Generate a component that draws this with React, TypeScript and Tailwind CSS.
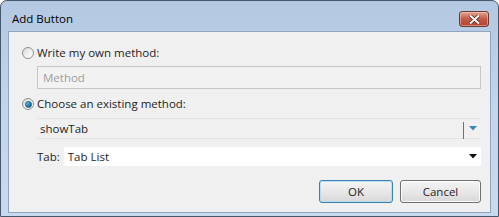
import React, { useState } from 'react';

const font = { fontFamily: '"Open Sans", "Noto Sans", sans-serif' };

const Radio: React.FC<{ checked: boolean }> = ({ checked }) => (
  <span className="relative w-[12px] h-[12px] rounded-full border border-[#8e8f8f] bg-gradient-to-br from-[#d5d5d5] via-[#f0f0f0] to-[#ffffff] flex items-center justify-center shrink-0">
    {checked && (
      <span className="w-[7px] h-[7px] rounded-full bg-gradient-to-br from-[#8fd6f0] via-[#2c8ec8] to-[#0f5a8a] border border-[#14507a]" />
    )}
  </span>
);

const Arrow: React.FC<{ color: string }> = ({ color }) => (
  <svg width="8" height="5" viewBox="0 0 8 5">
    <path d="M0 0 H8 L4 4.5 Z" fill={color} />
  </svg>
);

export default function App() {
  const [mode, setMode] = useState<'own' | 'existing'>('existing');

  return (
    <div style={font} className="w-[499px] h-[217px] text-[11.5px] text-[#1e1e1e] overflow-hidden">
      <div className="w-full h-full rounded-t-[7px] border border-[#47576b] bg-gradient-to-b from-[#b3c8e2] via-[#c3d5eb] to-[#c9daef] flex flex-col">
        {/* title bar */}
        <div className="h-[30px] flex items-start justify-between pl-[11px] pr-[9px]">
          <span className="mt-[10px] leading-[16px] text-[11.5px] text-black">Add Button</span>
          <button className="mt-[10px] w-[30px] h-[16px] rounded-[3px] border border-[#6a3a33] bg-gradient-to-b from-[#dfa594] via-[#c45a46] to-[#b4432e] flex items-center justify-center shadow-[inset_0_0_0_1px_rgba(255,220,210,0.45)]">
            <svg width="11" height="9" viewBox="0 0 11 9">
              <path d="M1 0.5 L5.5 4.5 L10 0.5 M1 8.5 L5.5 4.5 L10 8.5" stroke="#4a1f18" strokeWidth="3.2" fill="none" />
              <path d="M1 0.5 L5.5 4.5 L10 0.5 M1 8.5 L5.5 4.5 L10 8.5" stroke="#ffffff" strokeWidth="2" fill="none" />
            </svg>
          </button>
        </div>

        {/* client area */}
        <div className="mx-[7px] h-[182px] border border-[#8fa5c0] bg-[#f0f0f0] flex flex-col pt-[13px] pl-[13px] pr-[9px]">
          <label className="flex items-center gap-[3px] h-[16px]" onClick={() => setMode('own')}>
            <Radio checked={mode === 'own'} />
            <span>Write my own method:</span>
          </label>

          <div className="ml-[15px] mt-[5px] h-[23px] border border-[#c6c6c6] bg-[#f2f2f2] flex items-center pl-[5px] text-[#9e9e9e]">
            Method
          </div>

          <label className="flex items-center gap-[3px] h-[16px] mt-[7px]" onClick={() => setMode('existing')}>
            <Radio checked={mode === 'existing'} />
            <span>Choose an existing method:</span>
          </label>

          <div className="ml-[15px] mt-[6px] h-[21px] border-y border-[#e4e4e4] flex items-center justify-between pl-[3px]">
            <span>showTab</span>
            <div className="flex items-center h-full">
              <span className="w-[1px] h-[17px] mt-[4px] bg-[#3a80b3]" />
              <span className="w-[17px] flex justify-center">
                <Arrow color="#3f86b8" />
              </span>
            </div>
          </div>

          <div className="ml-[15px] mt-[8px] flex items-center gap-[4px]">
            <span>Tab:</span>
            <div className="flex-1 h-[19px] bg-white flex items-center justify-between pl-[4px]">
              <span>Tab List</span>
              <span className="w-[17px] flex justify-center">
                <Arrow color="#111111" />
              </span>
            </div>
          </div>

          <div className="mt-[14px] flex justify-end gap-[7px]">
            <button className="w-[74px] h-[23px] rounded-[3px] border border-[#3c7fb1] bg-gradient-to-b from-[#f4f4f4] via-[#e8e8e8] to-[#d8d8d8] shadow-[inset_0_0_0_1px_rgba(170,220,245,0.8)]">
              OK
            </button>
            <button className="w-[81px] h-[23px] rounded-[3px] border border-[#707070] bg-gradient-to-b from-[#f4f4f4] via-[#e8e8e8] to-[#d8d8d8] shadow-[inset_0_0_0_1px_rgba(255,255,255,0.8)]">
              Cancel
            </button>
          </div>
        </div>
      </div>
    </div>
  );
}
